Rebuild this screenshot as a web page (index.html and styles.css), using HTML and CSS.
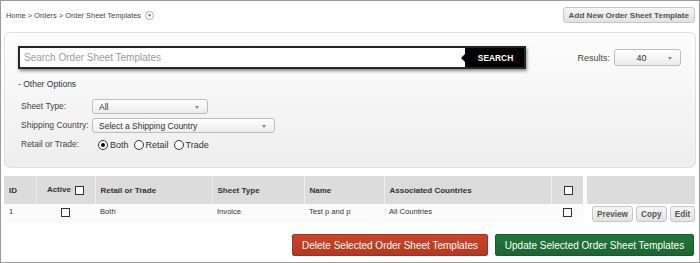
FILE: index.html
```html
<!DOCTYPE html>
<html lang="en">
<head>
  <meta charset="UTF-8">
  <title>Order Sheet Templates</title>
  <link rel="stylesheet" href="styles.css">
</head>
<body>
  <div class="frame">
    <div class="topbar">
      <div class="crumbs">
        <span>Home &gt; Orders &gt; Order Sheet Templates</span>
        <svg class="crumb-menu" width="9" height="9" viewBox="0 0 9 9">
          <circle cx="4.5" cy="4.5" r="4" fill="#fff" stroke="#9a9a9a" stroke-width="0.8"/>
          <path d="M2.6 3.6 L6.4 3.6 L4.5 5.8 Z" fill="#666"/>
        </svg>
      </div>
      <button class="btn-light btn-add">Add New Order Sheet Template</button>
    </div>

    <div class="search-panel">
      <div class="search-row">
        <div class="search-box">
          <input type="text" placeholder="Search Order Sheet Templates">
          <button class="search-btn">SEARCH</button>
        </div>
        <div class="results">
          <span class="results-label">Results:</span>
          <div class="select select-results">40</div>
        </div>
      </div>

      <div class="other">- Other Options</div>

      <div class="filters">
        <span class="flabel">Sheet Type:</span>
        <div class="select select-type">All</div>

        <span class="flabel">Shipping Country:</span>
        <div class="select select-country">Select a Shipping Country</div>

        <span class="flabel">Retail or Trade:</span>
        <div class="radios">
          <label><span class="radio on"></span>Both</label>
          <label><span class="radio"></span>Retail</label>
          <label><span class="radio"></span>Trade</label>
        </div>
      </div>
    </div>

    <div class="tables">
      <table class="grid">
        <colgroup>
          <col style="width:32px"><col style="width:59px"><col style="width:117px"><col style="width:92px">
          <col style="width:80px"><col style="width:167px"><col style="width:32px">
        </colgroup>
        <thead>
          <tr>
            <th>ID</th>
            <th class="center">Active <span class="check"></span></th>
            <th>Retail or Trade</th>
            <th>Sheet Type</th>
            <th>Name</th>
            <th>Associated Countries</th>
            <th class="center"><span class="check"></span></th>
          </tr>
        </thead>
        <tbody>
          <tr>
            <td>1</td>
            <td class="center"><span class="check"></span></td>
            <td>Both</td>
            <td>Invoice</td>
            <td>Test p and p</td>
            <td>All Countries</td>
            <td class="center"><span class="check"></span></td>
          </tr>
        </tbody>
      </table>

      <table class="actions">
        <thead><tr><th></th></tr></thead>
        <tbody>
          <tr>
            <td>
              <button class="btn-light btn-row">Preview</button>
              <button class="btn-light btn-row">Copy</button>
              <button class="btn-light btn-row">Edit</button>
            </td>
          </tr>
        </tbody>
      </table>
    </div>

    <div class="bulk">
      <button class="btn-big btn-delete">Delete Selected Order Sheet Templates</button>
      <button class="btn-big btn-update">Update Selected Order Sheet Templates</button>
    </div>
  </div>
</body>
</html>
```

FILE: styles.css
```css
body { margin: 0; background: #fff; font-family: "Liberation Sans", Arial, sans-serif; color: #333; }
.frame { width: 700px; height: 263px; box-sizing: border-box; border: 1px solid #9c9c9c; padding: 0 3px; overflow: hidden; }

/* top row */
.topbar { display: flex; justify-content: space-between; align-items: center; height: 16px; margin-top: 6px; }
.crumbs { display: flex; align-items: center; padding-left: 2px; font-size: 7.4px; color: #444; }
.crumb-menu { margin-left: 4px; display: block; }
.btn-light { font-family: inherit; font-weight: bold; color: #555; background: linear-gradient(#f6f6f6, #e3e3e3); border: 1px solid #c6c6c6; border-radius: 3px; padding: 0 4px; cursor: pointer; }
.btn-add { height: 16px; font-size: 8.1px; padding: 0 5px; margin-right: 1px; }

/* search panel */
.search-panel { margin-top: 9px; border: 1px solid #e0e0e0; border-radius: 6px; background: linear-gradient(#fdfdfd, #eeeeee); padding: 13px 14px 15px 13px; }
.search-row { display: flex; align-items: center; height: 23px; }
.search-box { position: relative; display: flex; width: 508px; height: 23px; box-sizing: border-box; border: 2px solid #262626; background: #fff; box-shadow: 1px 2px 3px rgba(0,0,0,0.45); }
.search-box input { flex: 1; min-width: 0; border: none; outline: none; padding: 0 4px; font-family: inherit; font-size: 10px; color: #333; background: transparent; }
.search-box input::placeholder { color: #9b9b9b; }
.search-btn { position: relative; width: 59px; border: none; background: #000; color: #fff; font-family: inherit; font-weight: bold; font-size: 8.4px; padding: 0 0 0 2px; }
.search-btn::before { content: ''; position: absolute; left: -4px; top: 50%; margin-top: -4px; border-top: 4px solid transparent; border-bottom: 4px solid transparent; border-right: 4px solid #000; }
.results { margin-left: auto; display: flex; align-items: center; }
.results-label { font-size: 9px; color: #444; margin-right: 4px; }

.select { position: relative; box-sizing: border-box; border: 1px solid #bdbdbd; border-radius: 3px; background: linear-gradient(#ffffff, #ececec); font-size: 8.5px; color: #333; display: flex; align-items: center; padding-left: 6px; }
.select::after { content: ''; position: absolute; right: 8px; top: 50%; margin-top: -1px; border-left: 2.5px solid transparent; border-right: 2.5px solid transparent; border-top: 3px solid #888; }
.select-results { width: 67px; height: 17px; justify-content: center; padding: 0 12px 0 0; font-size: 9px; }
.select-type { width: 116px; height: 15px; }
.select-country { width: 183px; height: 15px; }

.other { margin-top: 9px; font-size: 8.5px; line-height: 12px; color: #333; }
.filters { display: grid; grid-template-columns: 71px auto; row-gap: 4px; margin: 9px 0 0 3px; align-items: center; justify-items: start; }
.flabel { font-size: 8.5px; color: #444; line-height: 15px; }
.radios { display: flex; align-items: center; height: 15px; padding-left: 6px; font-size: 9px; color: #333; }
.radios label { display: flex; align-items: center; margin-right: 5px; }
.radio { width: 10px; height: 10px; box-sizing: border-box; border: 1px solid #333; border-radius: 50%; background: #fff; margin-right: 2px; position: relative; }
.radio.on::after { content: ''; position: absolute; left: 2px; top: 2px; width: 4px; height: 4px; border-radius: 50%; background: #111; }

/* tables */
.tables { display: flex; gap: 4px; margin-top: 8px; }
table { border-collapse: collapse; table-layout: fixed; }
.grid { width: 579px; }
.actions { width: 108px; }
th { height: 28px; padding: 0 5px; background: #dcdcdc; border-left: 1px solid #efefef; text-align: left; font-size: 8px; font-weight: bold; color: #333; }
th:first-child { border-left: none; }
td { height: 19px; padding: 3px 5px 0; vertical-align: top; background: #fbfbfb; font-size: 7.6px; color: #333; box-sizing: border-box; }
.center { text-align: center; }
.check { display: inline-block; width: 9px; height: 9px; box-sizing: border-box; border: 1px solid #333; background: #fff; vertical-align: middle; }
th .check { margin-left: 2px; }
td .check { margin-top: 1px; }
.actions td { background: #fff; padding: 2px 3px 0 5px; white-space: nowrap; }
.btn-row { height: 16px; font-size: 8.2px; margin-right: 1px; }
.btn-row:last-child { margin-right: 0; }

/* bulk buttons */
.bulk { display: flex; justify-content: flex-end; gap: 7px; margin: 11px 2px 0 0; }
.btn-big { height: 22px; padding: 0; white-space: nowrap; text-align: center; font-family: inherit; font-size: 10px; color: #fff; border-radius: 2px; cursor: pointer; }
.btn-delete { width: 196px; background: linear-gradient(#c8452a, #b8371c); border: 1px solid #a5301a; }
.btn-update { width: 199px; background: linear-gradient(#23753b, #1b6630); border: 1px solid #175a2a; }
```
